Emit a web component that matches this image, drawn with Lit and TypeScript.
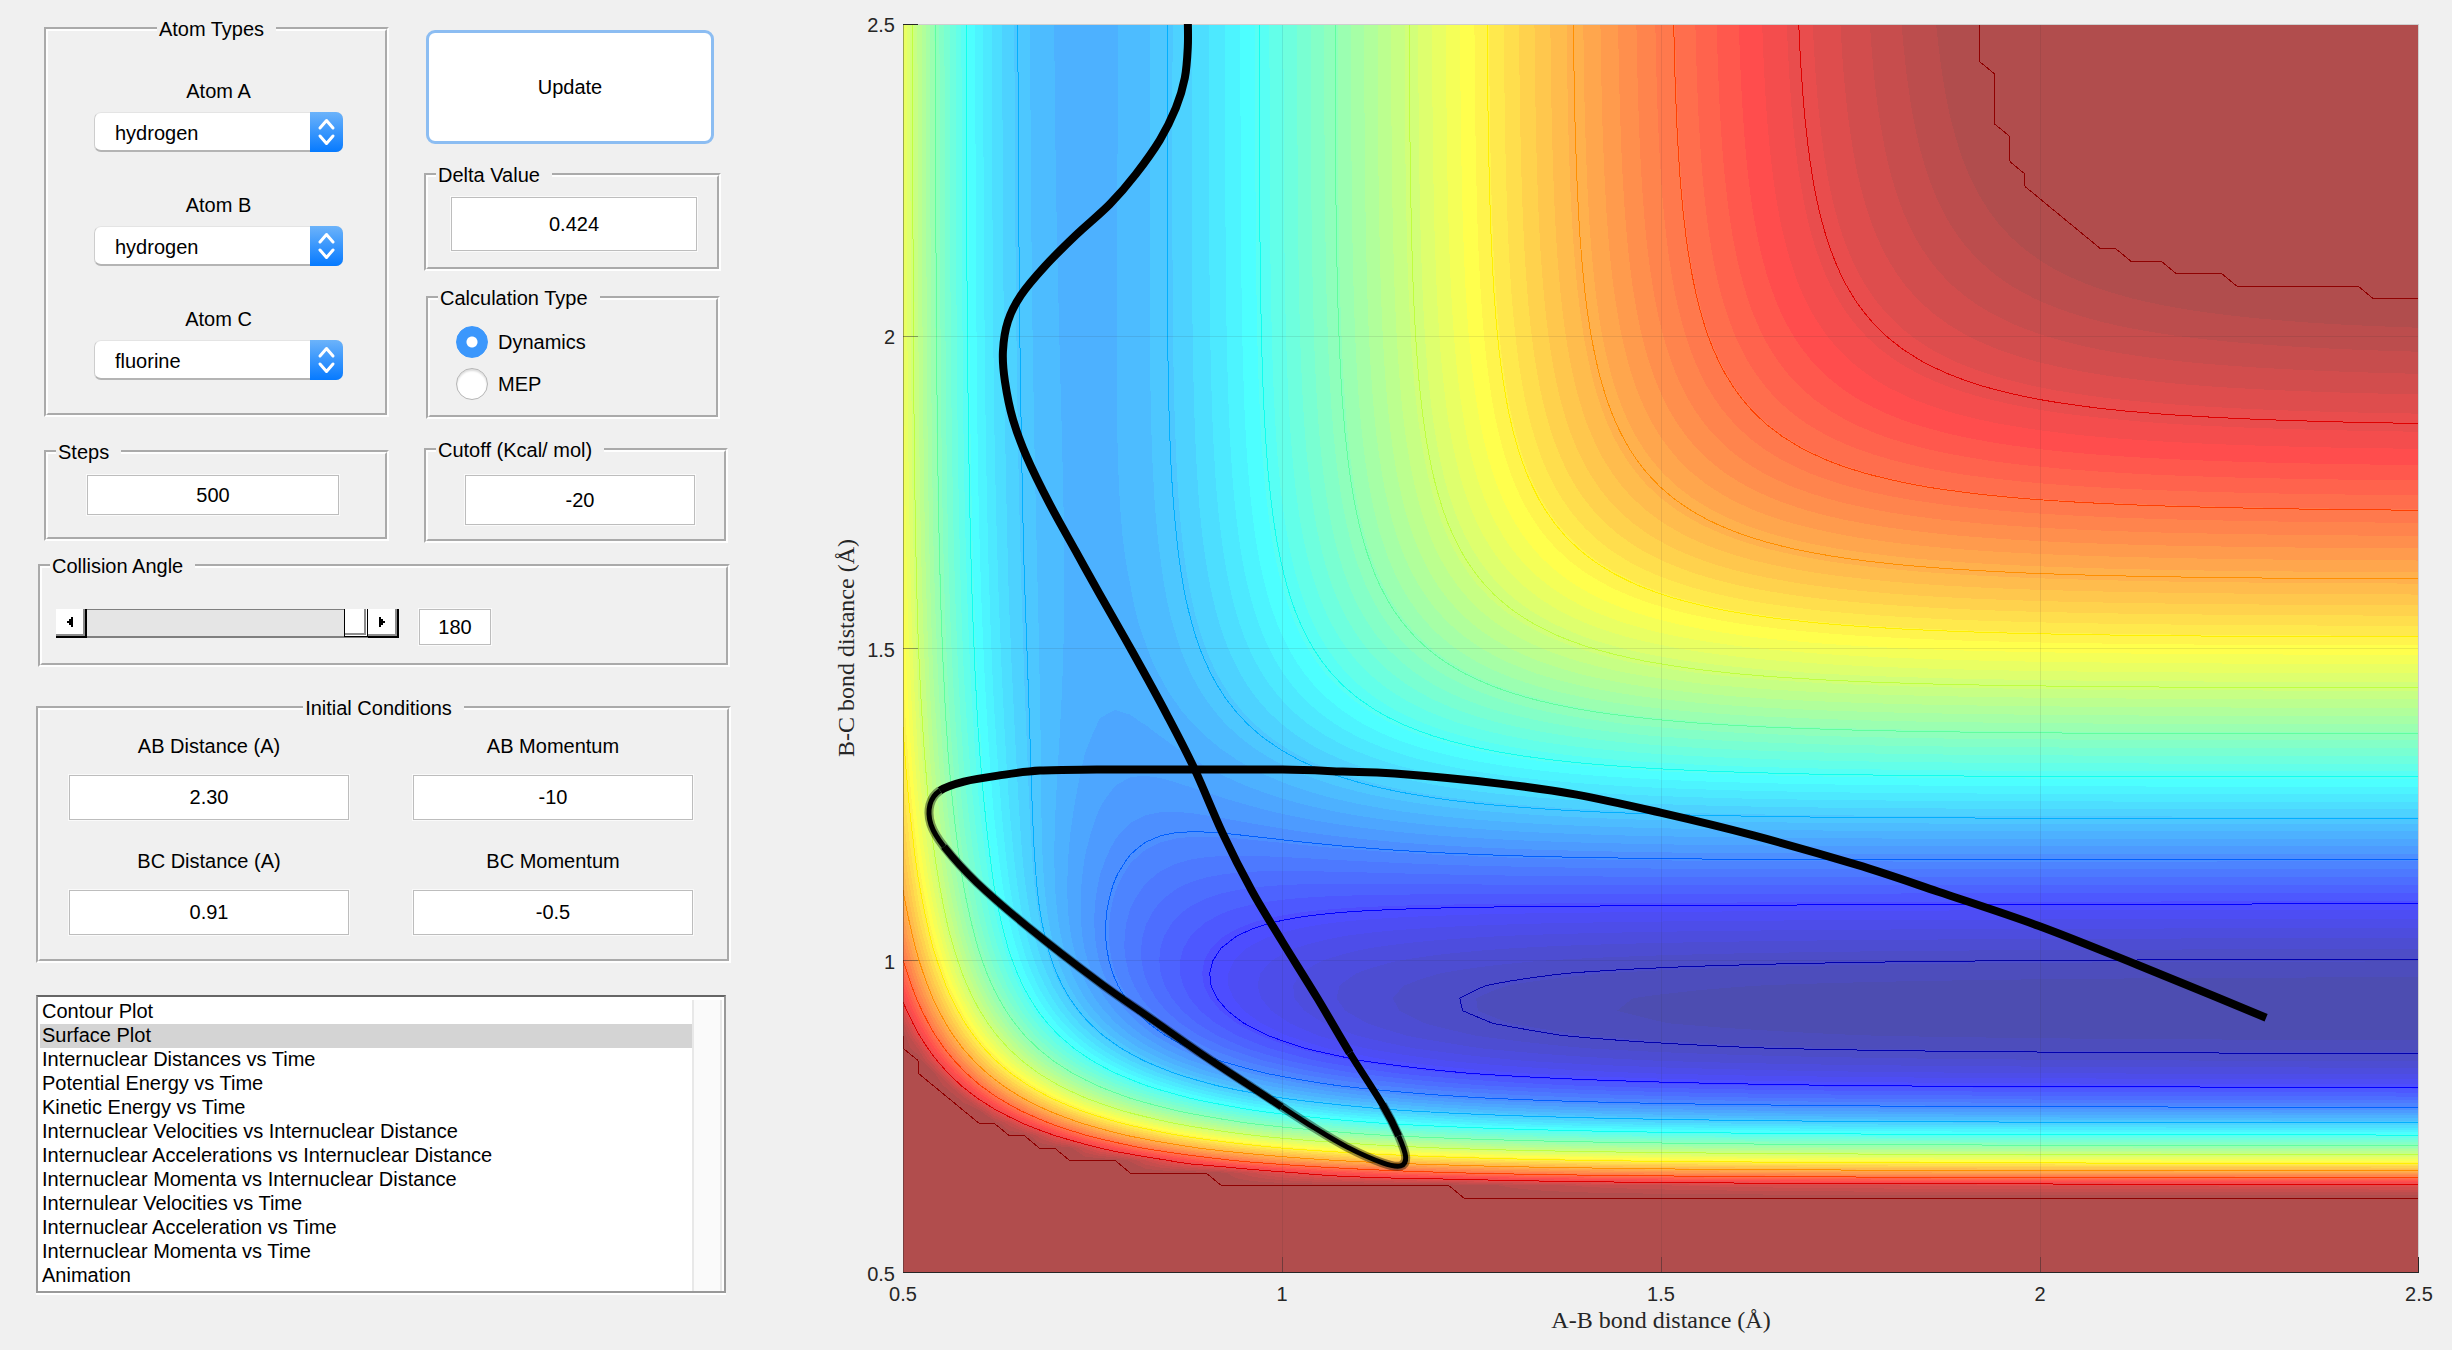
import { LitElement, html, css, svg } from "lit";
import { customElement, property, state } from "lit/decorators.js";

/* ---------- Potential energy surface (LEPS, collinear H + H-F) ---------- */

interface Morse {
  depth: number;
  beta: number;
  re: number;
}

const HH: Morse = { depth: 104, beta: 1.983, re: 0.74 };
const HF: Morse = { depth: 134, beta: 2.272, re: 0.92 };
const DELTA = 0.424;
const CUTOFF = -20;

const MIN_R = 0.5;
const MAX_R = 2.5;
const CELLS = 100;
const VIEW_W = 1517;
const VIEW_H = 1248;

function integrals(bond: Morse, r: number, s: number): [number, number] {
  const e1 = Math.exp(-bond.beta * (r - bond.re));
  const e2 = e1 * e1;
  const f = bond.depth / (4 * (1 + s));
  return [
    f * ((3 + s) * e2 - (2 + 6 * s) * e1),
    f * ((1 + 3 * s) * e2 - (6 + 2 * s) * e1),
  ];
}

function leps(rab: number, rbc: number): number {
  const s = DELTA * DELTA;
  const [qa, ja] = integrals(HH, rab, s);
  const [qb, jb] = integrals(HF, rbc, s);
  const [qc, jc] = integrals(HF, rab + rbc, s);
  const root = Math.sqrt(((ja - jb) ** 2 + (jb - jc) ** 2 + (jc - ja) ** 2) / 2);
  return qa + qb + qc - root;
}

const grid: number[][] = [];
let lowest = Infinity;
for (let j = 0; j <= CELLS; j++) {
  const row: number[] = [];
  for (let i = 0; i <= CELLS; i++) {
    const step = (MAX_R - MIN_R) / CELLS;
    const v = Math.min(CUTOFF, leps(MIN_R + i * step, MIN_R + j * step));
    lowest = Math.min(lowest, v);
    row.push(v);
  }
  grid.push(row);
}

const px = (i: number) => +((i / CELLS) * VIEW_W).toFixed(1);
const py = (j: number) => +(VIEW_H - (j / CELLS) * VIEW_H).toFixed(1);

type Corner = [number, number, number];

function corners(i: number, j: number): Corner[] {
  return [
    [i, j, grid[j][i]],
    [i + 1, j, grid[j][i + 1]],
    [i + 1, j + 1, grid[j + 1][i + 1]],
    [i, j + 1, grid[j + 1][i]],
  ];
}

function crossing(a: Corner, b: Corner, level: number): string {
  const t = (level - a[2]) / (b[2] - a[2]);
  return `${px(a[0] + t * (b[0] - a[0]))} ${py(a[1] + t * (b[1] - a[1]))}`;
}

/* Area of the surface at or above the level, as one path. */
function regionPath(level: number): string {
  const out: string[] = [];
  for (let j = 0; j < CELLS; j++) {
    let start = -1;
    for (let i = 0; i <= CELLS; i++) {
      const cs = i < CELLS ? corners(i, j) : [];
      const above = cs.filter((c) => c[2] >= level).length;
      if (above === 4) {
        if (start < 0) start = i;
        continue;
      }
      if (start >= 0) {
        out.push(`M${px(start)} ${py(j)}H${px(i)}V${py(j + 1)}H${px(start)}Z`);
        start = -1;
      }
      if (above === 0) continue;
      const pts: string[] = [];
      cs.forEach((a, k) => {
        const b = cs[(k + 1) % 4];
        if (a[2] >= level) pts.push(`${px(a[0])} ${py(a[1])}`);
        if (a[2] >= level !== b[2] >= level) pts.push(crossing(a, b, level));
      });
      out.push(`M${pts.join("L")}Z`);
    }
  }
  return out.join("");
}

function linePath(level: number): string {
  const out: string[] = [];
  for (let j = 0; j < CELLS; j++) {
    for (let i = 0; i < CELLS; i++) {
      const cs = corners(i, j);
      const pts: string[] = [];
      cs.forEach((a, k) => {
        const b = cs[(k + 1) % 4];
        if (a[2] >= level !== b[2] >= level) pts.push(crossing(a, b, level));
      });
      for (let k = 0; k + 1 < pts.length; k += 2) {
        if (pts[k] !== pts[k + 1]) out.push(`M${pts[k]}L${pts[k + 1]}`);
      }
    }
  }
  return out.join("");
}

/* Jet colour map, symmetric from dark blue to dark red. */
const COLORS = 63;
function jet(index: number): [number, number, number] {
  const k = Math.max(0, Math.min(COLORS - 1, index));
  const ramp = (c: number) =>
    Math.max(0, Math.min(1, (24 - Math.abs(k - c)) / 16));
  return [ramp(47), ramp(31), ramp(15)].map((v) => v * 255) as [number, number, number];
}

const rgb = (c: number[]) => `rgb(${c.map((v) => Math.round(v)).join(",")})`;
const SURFACE_ALPHA = 0.7;
const faded = (k: number) =>
  rgb(jet(k).map((v) => v * SURFACE_ALPHA + 255 * (1 - SURFACE_ALPHA)));

const bandSize = (CUTOFF - lowest) / COLORS;
const bands = Array.from({ length: COLORS - 1 }, (_, n) => ({
  d: regionPath(lowest + (n + 1) * bandSize),
  fill: faded(n + 1),
}));

const contours = Array.from({ length: 12 }, (_, n) => {
  const level = -130 + n * 10;
  return {
    d: linePath(level),
    stroke: rgb(jet(Math.floor((level - lowest) / bandSize))),
  };
});

/* ---------- Trajectory, in plot units ---------- */

const track: [number, number][] = [
  [1364, 993], [1311, 971], [1235, 940], [1136, 901], [1036, 867], [954, 840],
  [852, 811], [758, 788], [674, 770], [597, 759], [492, 749], [440, 747],
  [380, 745], [283, 745], [194, 745], [137, 746], [95, 751], [61, 757],
  [37, 766], [27, 780], [28, 800], [41, 822], [74, 858], [126, 903],
  [197, 958], [247, 993], [300, 1030], [344, 1059], [379, 1082], [410, 1102],
  [444, 1122], [480, 1138], [498, 1141], [503, 1132], [496, 1111], [480, 1080],
  [447, 1028], [415, 974], [379, 916], [349, 866], [320, 809], [292, 745],
  [264, 690], [230, 628], [197, 570], [173, 527], [147, 480], [124, 433],
  [110, 395], [102, 357], [100, 327], [105, 297], [118, 271], [142, 242],
  [173, 211], [207, 180], [233, 150], [257, 116], [273, 84], [282, 54],
  [285, 23], [285, -4],
];

function smooth(from: number, to: number): string {
  let d = `M${track[from].join(" ")}`;
  for (let i = from; i < to; i++) {
    const p0 = track[Math.max(0, i - 1)];
    const p1 = track[i];
    const p2 = track[i + 1];
    const p3 = track[Math.min(track.length - 1, i + 2)];
    const c = [
      p1[0] + (p2[0] - p0[0]) / 6, p1[1] + (p2[1] - p0[1]) / 6,
      p2[0] - (p3[0] - p1[0]) / 6, p2[1] - (p3[1] - p1[1]) / 6,
      p2[0], p2[1],
    ];
    d += `C${c.map((v) => v.toFixed(1)).join(" ")}`;
  }
  return d;
}

const END = track.length - 1;
const pieces = [
  { d: smooth(0, 18), w: 8 },
  { d: smooth(18, 21), w: 5 },
  { d: smooth(21, 28), w: 7 },
  { d: smooth(28, 34), w: 5 },
  { d: smooth(34, 36), w: 7 },
  { d: smooth(36, END), w: 8 },
];
const submerged = smooth(18, 35);

/* ---------- Elements ---------- */

const TICKS = ["0.5", "1", "1.5", "2", "2.5"];

@customElement("surface-plot")
export class SurfacePlot extends LitElement {
  static styles = css`
    :host {
      display: grid;
      grid-template-columns: 24px 45px minmax(0, 1fr);
      grid-template-rows: minmax(480px, 1fr) 33px 28px;
      font: 20px/24px "Liberation Sans", Arial, sans-serif;
      color: #262626;
    }
    .y-title,
    .x-title {
      font: 24px/28px "Liberation Serif", "Times New Roman", serif;
      text-align: center;
    }
    .y-title {
      writing-mode: vertical-rl;
      transform: rotate(180deg);
      line-height: 24px;
    }
    .y-ticks {
      display: flex;
      flex-direction: column-reverse;
      justify-content: space-between;
      text-align: right;
      margin: -11px 0 -13px;
      padding-right: 8px;
    }
    .x-ticks {
      grid-column: 3;
      display: flex;
      justify-content: space-between;
      margin: 0 -20px;
      padding-top: 9px;
    }
    .x-ticks span {
      width: 40px;
      text-align: center;
    }
    .x-title {
      grid-column: 3;
    }
    .canvas {
      min-height: 0;
      display: grid;
    }
    .plot {
      width: 100%;
      height: 100%;
      min-height: 0;
      display: block;
      contain: size;
    }
    .surface {
      shape-rendering: crispEdges;
    }
    .stroke {
      fill: none;
      vector-effect: non-scaling-stroke;
    }
    .thin {
      stroke-width: 1px;
      shape-rendering: crispEdges;
    }
    .track {
      stroke: #000;
      stroke-linejoin: round;
    }
    .halo {
      stroke: rgba(0, 0, 0, 0.4);
      stroke-width: 9px;
    }
    .gridline {
      stroke: rgba(38, 38, 38, 0.1);
    }
    .tick {
      stroke: rgba(38, 38, 38, 0.4);
    }
    .edge {
      stroke: #cfcfcf;
      stroke-width: 2px;
    }
    .axis {
      stroke: #262626;
      stroke-width: 2px;
    }
  `;

  render() {
    const gx = [1, 2, 3].map((n) => (n * VIEW_W) / 4);
    const gy = [1, 2, 3].map((n) => (n * VIEW_H) / 4);
    return html`
      <div class="y-title">B-C bond distance (Å)</div>
      <div class="y-ticks">${TICKS.map((t) => html`<span>${t}</span>`)}</div>
      <div class="canvas">
        <svg
          class="plot"
          viewBox="0 0 ${VIEW_W} ${VIEW_H}"
          preserveAspectRatio="none"
          role="img"
          aria-label="Surface Plot"
        >
          <g class="surface">
            <rect width=${VIEW_W} height=${VIEW_H} fill=${faded(0)}></rect>
            ${bands.map((b) => svg`<path d=${b.d} fill=${b.fill}></path>`)}
          </g>
          ${contours.map(
            (c) => svg`<path class="stroke thin" d=${c.d} stroke=${c.stroke}></path>`
          )}
          ${gx.map(
            (x) => svg`
              <path class="stroke thin gridline" d="M${x} 0V${VIEW_H}"></path>
              <path class="stroke thin tick" d="M${x} ${VIEW_H}v-16"></path>`
          )}
          ${gy.map(
            (y) => svg`
              <path class="stroke thin gridline" d="M0 ${y}H${VIEW_W}"></path>
              <path class="stroke thin tick" d="M0 ${y}h15"></path>`
          )}
          <path class="stroke edge" d="M0 0H${VIEW_W}V${VIEW_H}"></path>
          <path class="stroke thin tick" d="M1 0V${VIEW_H}"></path>
          <path class="stroke axis" d="M0 0h15"></path>
          <path class="stroke axis" d="M${VIEW_W} ${VIEW_H}v-16"></path>
          <path class="stroke axis" d="M0 ${VIEW_H}H${VIEW_W}"></path>
          <path class="stroke track halo" d=${submerged}></path>
          ${pieces.map(
            (p) => svg`<path class="stroke track" d=${p.d} stroke-width=${p.w}></path>`
          )}
        </svg>
      </div>
      <div class="x-ticks">${TICKS.map((t) => html`<span>${t}</span>`)}</div>
      <div class="x-title">A-B bond distance (Å)</div>
    `;
  }
}

@customElement("pop-up")
export class PopUp extends LitElement {
  @property() label = "";
  @property() value = "";

  static styles = css`
    :host {
      display: flex;
      flex-direction: column;
      align-items: center;
      gap: 9px;
    }
    .box {
      position: relative;
      width: 100%;
      height: 40px;
    }
    .menu {
      appearance: none;
      width: 100%;
      height: 100%;
      padding: 2px 48px 0 20px;
      border: 1px solid #cdcdcd;
      border-top-color: #e4e4e4;
      border-bottom: 2px solid #b4b4b4;
      border-radius: 7px;
      background: #fff;
      font: inherit;
      color: #000;
    }
    .cap {
      position: absolute;
      top: 0;
      right: 0;
      width: 33px;
      height: 100%;
      border-radius: 0 7px 7px 0;
      background: linear-gradient(#6cb3fa, #067aff);
      pointer-events: none;
    }
  `;

  render() {
    return html`
      <label for="menu">${this.label}</label>
      <div class="box">
        <select class="menu" id="menu" .value=${this.value}>
          ${["hydrogen", "fluorine", "chlorine"].map(
            (o) => html`<option ?selected=${o === this.value}>${o}</option>`
          )}
        </select>
        <svg class="cap" viewBox="0 0 33 40" aria-hidden="true">
          <path
            d="M10 16l6.500-7.500 6.500 7.500M10 24l6.500 7.500 6.500-7.500"
            fill="none"
            stroke="#fff"
            stroke-width="3"
            stroke-linecap="round"
            stroke-linejoin="round"
          ></path>
        </svg>
      </div>
    `;
  }
}

const PLOTS = [
  "Contour Plot",
  "Surface Plot",
  "Internuclear Distances vs Time",
  "Potential Energy vs Time",
  "Kinetic Energy vs Time",
  "Internuclear Velocities vs Internuclear Distance",
  "Internuclear Accelerations vs Internuclear Distance",
  "Internuclear Momenta vs Internuclear Distance",
  "Internulear Velocities vs Time",
  "Internuclear Acceleration vs Time",
  "Internuclear Momenta vs Time",
  "Animation",
];

@customElement("app-root")
export class AppRoot extends LitElement {
  @state() private angle = 180;

  static styles = css`
    :host {
      display: grid;
      grid-template-columns: minmax(0, 731fr) minmax(0, 1618fr);
      gap: 103px;
      box-sizing: border-box;
      min-height: 100vh;
      background: #f0f0f0;
      color: #000;
      font: 20px/24px "Liberation Sans", Arial, sans-serif;
    }
    * {
      box-sizing: border-box;
    }
    .controls {
      display: flex;
      flex-direction: column;
      padding: 17px 0 0 36px;
    }
    .plot {
      padding: 24px 33px 16px 0;
    }
    .top {
      display: grid;
      grid-template-columns: minmax(0, 345fr) minmax(0, 304fr);
      gap: 35px;
      padding: 0 3px 0 8px;
    }
    .stack {
      display: flex;
      flex-direction: column;
    }
    .panel {
      min-width: 0;
      margin: 0;
      padding: 0;
      border: 4px groove #fefefe;
    }
    .panel > legend {
      margin-left: 8px;
      padding: 0 12px 0 2px;
    }
    .panel.centered > legend {
      margin: 0 auto;
    }
    .field {
      display: block;
      width: 100%;
      border: 1px solid #bdbdbd;
      outline: 1px solid #fafafa;
      padding: 0;
      background: #fff;
      color: #000;
      font: inherit;
      text-align: center;
    }
    .atoms .body {
      display: flex;
      flex-direction: column;
      gap: 41px;
      padding: 38px 42px 33px 46px;
    }
    .steps {
      margin-top: 23px;
    }
    .steps .body {
      padding: 11px 46px 22px 39px;
    }
    .steps .field {
      height: 40px;
    }
    .update {
      height: 114px;
      margin: 13px 14px 0 2px;
      border: 3px solid #8cbdf2;
      border-radius: 9px;
      background: #fff;
      color: #000;
      font: inherit;
    }
    .delta {
      margin: 19px 7px 0 0;
    }
    .delta .body {
      padding: 10px 20px 16px 23px;
    }
    .delta .field {
      height: 54px;
    }
    .calc {
      margin: 15px 8px 0 2px;
    }
    .calc .body {
      display: flex;
      flex-direction: column;
      gap: 10px;
      padding: 16px 26px 15px;
    }
    .choice {
      display: flex;
      align-items: center;
      gap: 10px;
    }
    .radio {
      appearance: none;
      width: 32px;
      height: 32px;
      margin: 0;
      border: 1px solid #b5b5b5;
      border-radius: 50%;
      background: #fff;
      box-shadow: inset 0 2px 2px #dcdcdc;
    }
    .radio:checked {
      border-color: #3b97fc;
      background: radial-gradient(circle, #fff 5px, #3b97fc 6px);
      box-shadow: none;
    }
    .cutoff {
      margin-top: 19px;
    }
    .cutoff .body {
      padding: 13px 29px 14px 37px;
    }
    .cutoff .field {
      height: 50px;
    }
    .collision {
      margin: 11px 1px 0 2px;
    }
    .angle {
      display: flex;
      align-items: flex-start;
      gap: 20px;
      padding: 31px 14px 18px;
    }
    .angle .field {
      width: 72px;
      height: 36px;
    }
    .slider {
      display: flex;
      width: 343px;
      height: 29px;
    }
    .step {
      flex: none;
      display: grid;
      place-items: center;
      width: 31px;
      padding: 0 3px 4px 0;
      border: 0;
      background: #fff;
      box-shadow: inset -2px -2px #000, inset -4px -4px #8c8c8c;
    }
    .step svg {
      width: 6px;
      height: 10px;
      shape-rendering: crispEdges;
    }
    .range {
      appearance: none;
      flex: 1;
      min-width: 0;
      height: 29px;
      margin: 0;
      border: 1px solid #7f7f7f;
      border-width: 1px 0 2px;
      background: #e5e5e5;
    }
    .range::-webkit-slider-thumb {
      appearance: none;
      box-sizing: border-box;
      width: 24px;
      height: 28px;
      border: 1px solid #000;
      border-top: 0;
      background: #fff;
      box-shadow: inset -1px -1px #fff, inset -3px -3px #8c8c8c;
    }
    .initial {
      margin-top: 29px;
    }
    .initial .body {
      display: grid;
      grid-template-columns: 1fr 1fr;
      gap: 29px 64px;
      padding: 14px 34px 24px 29px;
    }
    .entry {
      display: flex;
      flex-direction: column;
      gap: 17px;
      text-align: center;
    }
    .entry .field {
      height: 45px;
    }
    .list {
      display: flex;
      height: 298px;
      margin: 32px 5px 0 0;
      padding: 3px 2px 0;
      border: 2px solid #999;
      border-top-color: #666;
      box-shadow: 0 2px #fff;
      background: #fff;
    }
    .items {
      flex: 1;
      min-width: 0;
      height: 290px;
      padding: 0;
      border: 0;
      border-radius: 0;
      outline: 0;
      overflow: hidden;
      background: #fff;
      font: inherit;
      color: #000;
    }
    .items option {
      height: 24px;
      min-height: 24px;
      padding: 0 2px;
      line-height: 24px;
      color: #000;
    }
    .items option:checked {
      background: linear-gradient(#d4d4d4, #d4d4d4);
    }
    .rail {
      width: 30px;
      border: 1px solid #e8e8e8;
      border-width: 0 2px;
      background: #fafafa;
    }
  `;

  private nudge(by: number) {
    this.angle = Math.max(0, Math.min(180, this.angle + by));
  }

  private entry(id: string, label: string, value: string) {
    return html`
      <div class="entry">
        <label for=${id}>${label}</label>
        <input class="field" id=${id} .value=${value} />
      </div>
    `;
  }

  private single(kind: string, label: string, value: string) {
    return html`
      <fieldset class="panel ${kind}">
        <legend>${label}</legend>
        <div class="body">
          <input class="field" aria-label=${label} .value=${value} />
        </div>
      </fieldset>
    `;
  }

  render() {
    return html`
      <section class="controls">
        <div class="top">
          <div class="stack">
            <fieldset class="panel centered atoms">
              <legend>Atom Types</legend>
              <div class="body">
                <pop-up label="Atom A" value="hydrogen"></pop-up>
                <pop-up label="Atom B" value="hydrogen"></pop-up>
                <pop-up label="Atom C" value="fluorine"></pop-up>
              </div>
            </fieldset>
            ${this.single("steps", "Steps", "500")}
          </div>
          <div class="stack">
            <button class="update">Update</button>
            ${this.single("delta", "Delta Value", "0.424")}
            <fieldset class="panel calc">
              <legend>Calculation Type</legend>
              <div class="body">
                <label class="choice">
                  <input class="radio" type="radio" name="calc" checked />Dynamics
                </label>
                <label class="choice">
                  <input class="radio" type="radio" name="calc" />MEP
                </label>
              </div>
            </fieldset>
            ${this.single("cutoff", "Cutoff (Kcal/ mol)", "-20")}
          </div>
        </div>

        <fieldset class="panel collision">
          <legend>Collision Angle</legend>
          <div class="angle">
            <div class="slider">
              <button class="step" aria-label="Decrease angle" @click=${() => this.nudge(-1)}>
                <svg viewBox="0 0 6 10"><path d="M6 0H4V2H2V4H0V6H2V8H4V10H6Z"></path></svg>
              </button>
              <input
                class="range"
                type="range"
                min="0"
                max="180"
                aria-label="Collision Angle"
                .value=${String(this.angle)}
                @input=${(e: Event) =>
                  (this.angle = Number((e.target as HTMLInputElement).value))}
              />
              <button class="step" aria-label="Increase angle" @click=${() => this.nudge(1)}>
                <svg viewBox="0 0 6 10"><path d="M0 0H2V2H4V4H6V6H4V8H2V10H0Z"></path></svg>
              </button>
            </div>
            <input class="field" aria-label="Angle in degrees" .value=${String(this.angle)} />
          </div>
        </fieldset>

        <fieldset class="panel centered initial">
          <legend>Initial Conditions</legend>
          <div class="body">
            ${this.entry("rab", "AB Distance (A)", "2.30")}
            ${this.entry("pab", "AB Momentum", "-10")}
            ${this.entry("rbc", "BC Distance (A)", "0.91")}
            ${this.entry("pbc", "BC Momentum", "-0.5")}
          </div>
        </fieldset>

        <div class="list">
          <select class="items" size="12" aria-label="Plot type">
            ${PLOTS.map(
              (p) => html`<option ?selected=${p === "Surface Plot"}>${p}</option>`
            )}
          </select>
          <div class="rail"></div>
        </div>
      </section>
      <surface-plot class="plot"></surface-plot>
    `;
  }
}
